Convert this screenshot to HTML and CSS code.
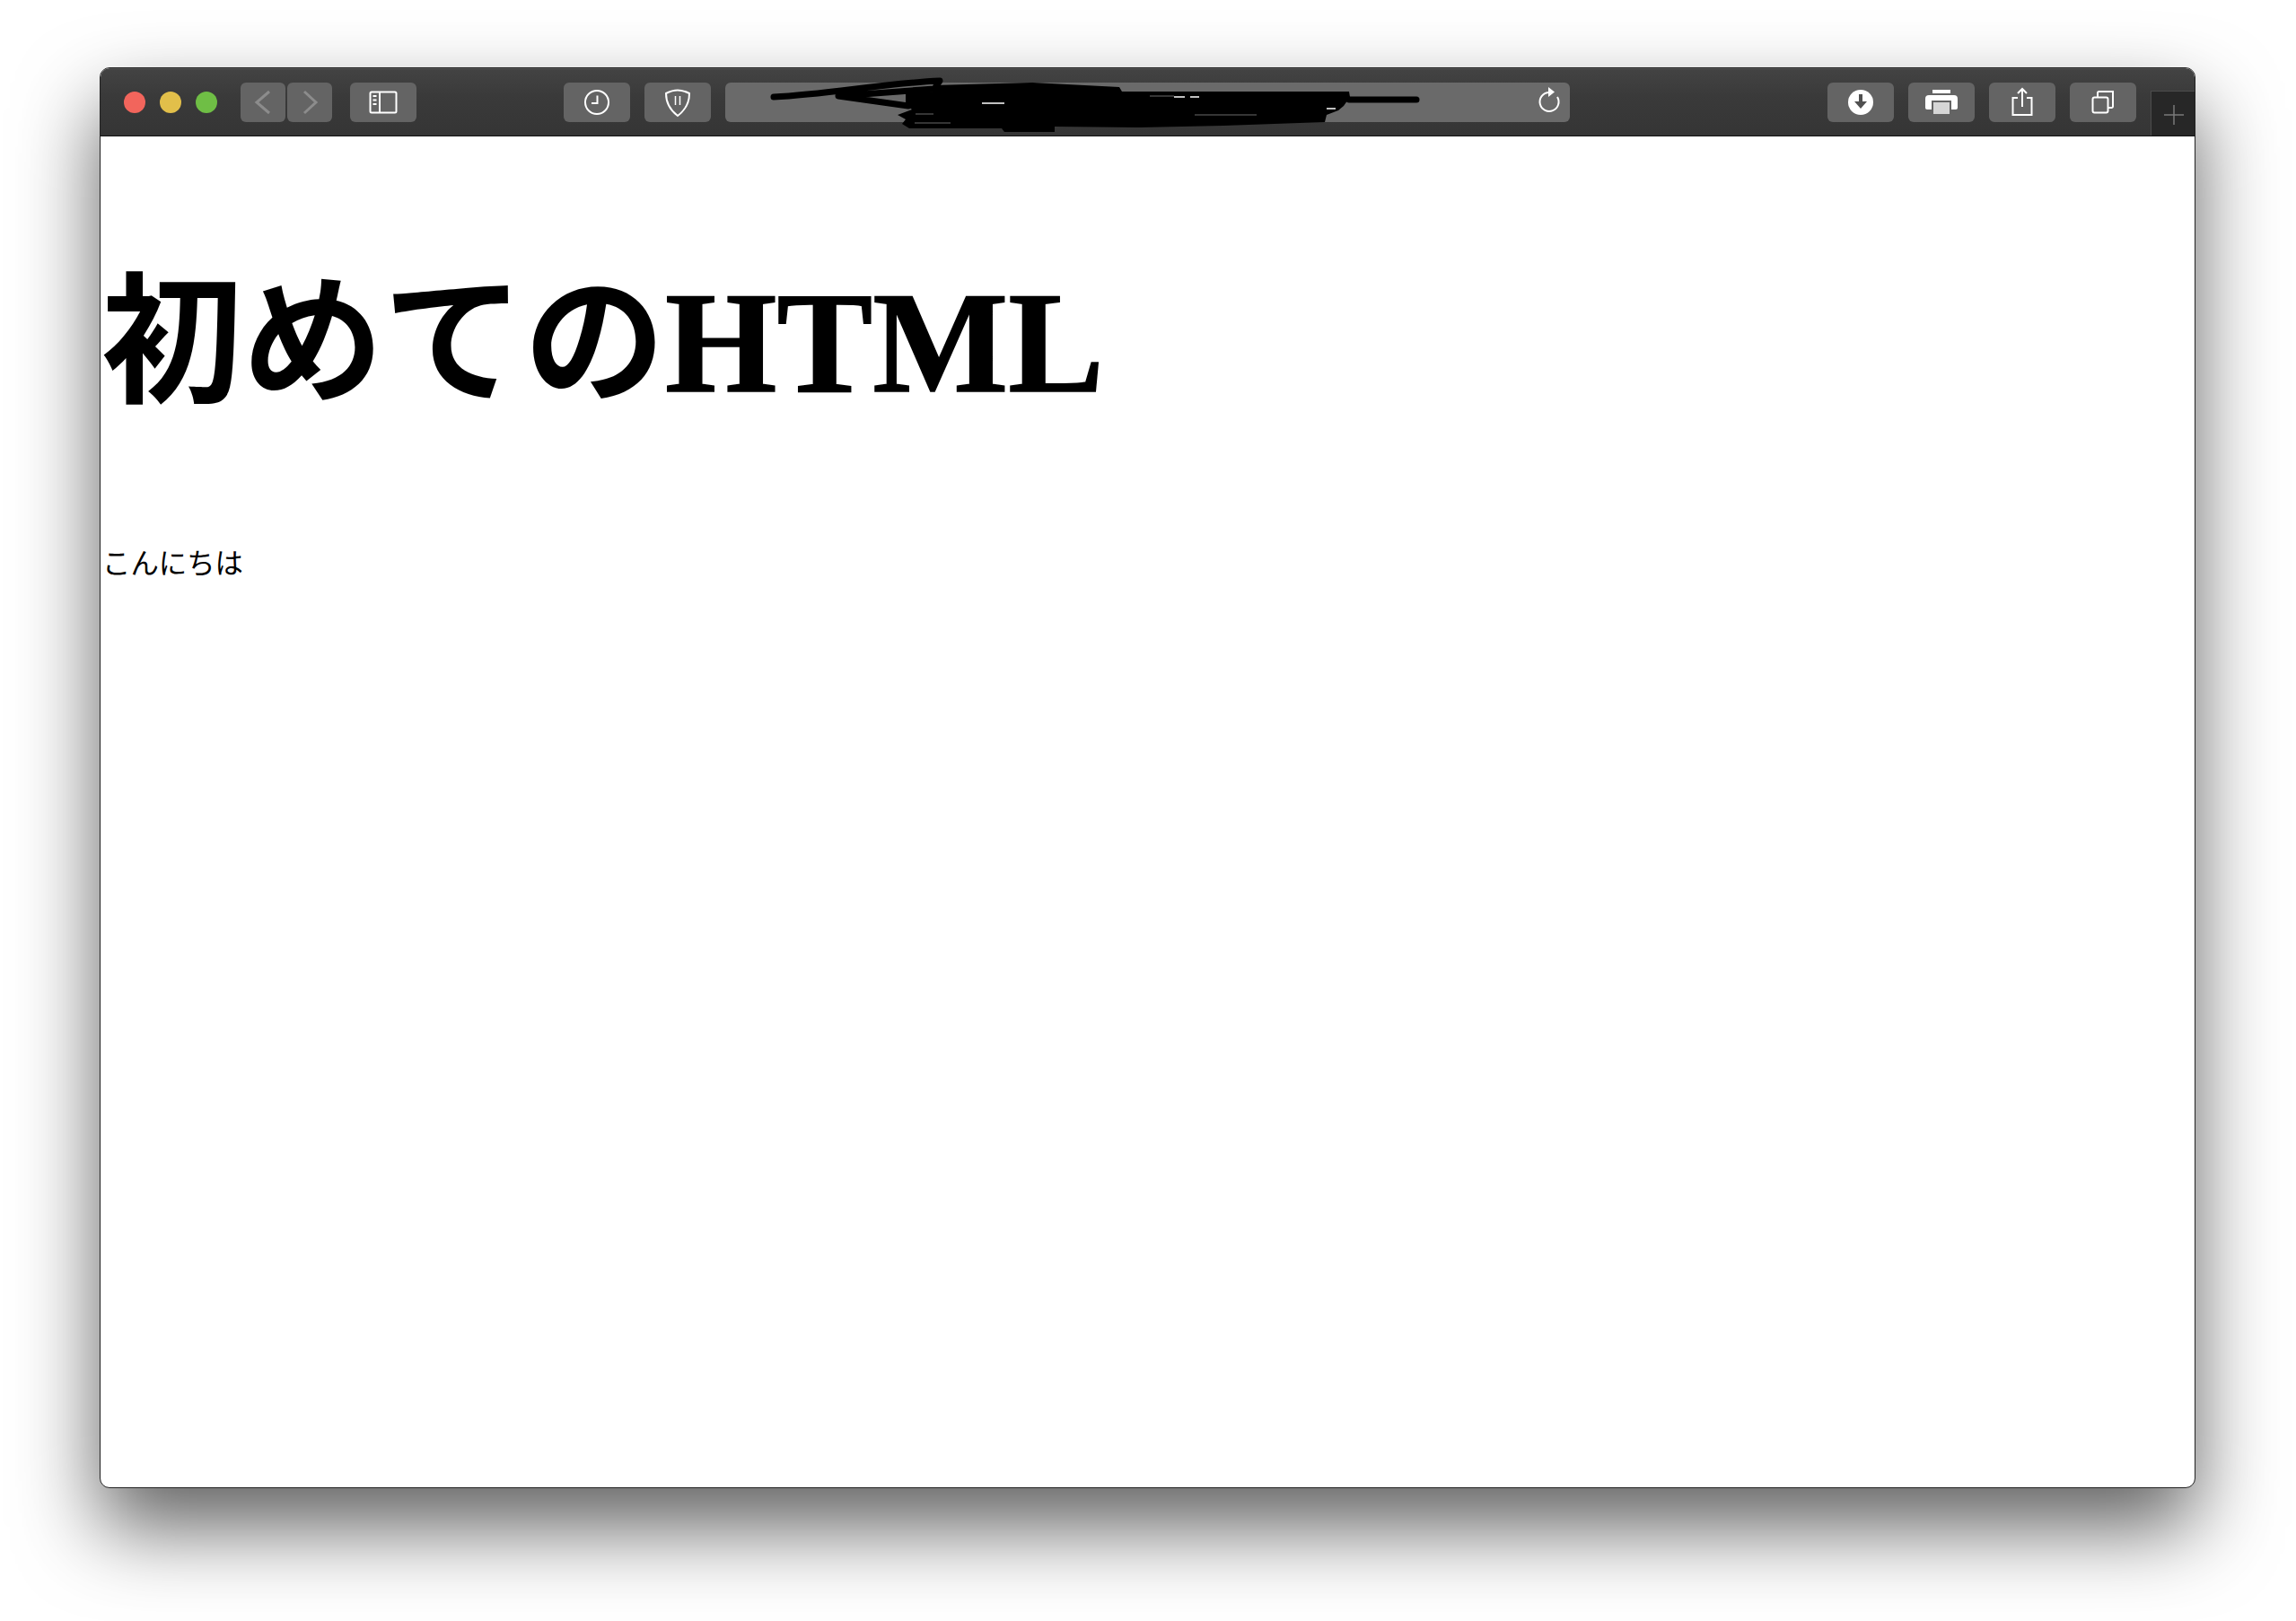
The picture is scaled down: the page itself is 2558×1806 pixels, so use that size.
FILE: index.html
```html
<!DOCTYPE html>
<html lang="ja">
<head>
    <meta charset="UTF-8">
    <title>初めてのHTML</title>
    <link rel="stylesheet" href="styles.css">
</head>
<body>
    <div class="window">
        <div class="toolbar">
            <div class="lights">
                <span class="light red"></span>
                <span class="light yellow"></span>
                <span class="light green"></span>
            </div>
            <div class="nav-group">
                <div class="btn nav-btn">
                    <svg viewBox="0 0 50 44"><path class="dim" d="M32 10 18 22l14 12"/></svg>
                </div>
                <div class="btn nav-btn">
                    <svg viewBox="0 0 50 44"><path class="dim" d="M19 10 32 22 19 34"/></svg>
                </div>
            </div>
            <div class="btn sidebar-btn">
                <svg viewBox="0 0 74 44">
                    <rect class="line" x="22.5" y="10.5" width="29" height="23" rx="1.5"/>
                    <path class="line" d="M33 10.5v23"/>
                    <path class="line" d="M25.5 15h4M25.5 19.5h4M25.5 24h4"/>
                </svg>
            </div>
            <div class="btn history-btn">
                <svg viewBox="0 0 74 44">
                    <circle class="line" cx="37" cy="22" r="13"/>
                    <path class="line" d="M37.5 14.5v8.5H31"/>
                </svg>
            </div>
            <div class="btn shield-btn">
                <svg viewBox="0 0 74 44">
                    <path class="line" d="M37 37C29 31 24 24 24 12c4-2 8-3.500 13-3.500S46 10 50 12c0 12-5 19-13 25Z"/>
                    <path class="thin" d="M34.500 15v10M39.500 15v10"/>
                </svg>
            </div>
            <div class="url-bar">
                <svg class="redaction" viewBox="0 0 941 76">
                    <path class="scrawl" d="M54 33C115 30 175 18 239 15L233 24 126 32 204 43"/>
                    <path class="scrawl" d="M695 36H770"/>
                    <path class="blot" d="M233 20 342 17 439 22 442 27 530 27 695 27 696 33 689 43 683 48 670 53 668 61 555 65 458 67 367 66 367 72 311 72 308 68 205 68 197 63 201 58 192 53 208 47 201 42 201 28 233 27Z"/>
                    <path class="sliver" d="M286 40H311M500 33H512M518 33H528M670 46H680"/>
                    <path class="grey-sliver" d="M473 32H500M523 53H592M211 62H251M212 52H232"/>
                </svg>
                <svg class="reload" viewBox="0 0 30 44">
                    <path class="line" d="M14 11a10.500 10.500 0 1 0 10 5"/>
                    <path class="fill" d="M14 5l7 5.500L14 16Z"/>
                </svg>
            </div>
            <div class="btn download-btn">
                <svg viewBox="0 0 74 44">
                    <circle class="fill" cx="37" cy="22" r="14"/>
                    <path class="dark" d="M35 13h4v8h5l-7 8-7-8h5Z"/>
                </svg>
            </div>
            <div class="btn print-btn">
                <svg viewBox="0 0 74 44">
                    <rect class="fill" x="27" y="8" width="20" height="4"/>
                    <path class="fill" d="M23 14h28a4 4 0 0 1 4 4v10a2 2 0 0 1-2 2H21a2 2 0 0 1-2-2V18a4 4 0 0 1 4-4Z"/>
                    <rect class="paper" x="27" y="21" width="20" height="15"/>
                </svg>
            </div>
            <div class="btn share-btn">
                <svg viewBox="0 0 74 44">
                    <path class="line" d="M32 17h-5.500v19h21V17H42"/>
                    <path class="line" d="M37 7v20M32 12l5-5 5 5"/>
                </svg>
            </div>
            <div class="btn tabs-btn">
                <svg viewBox="0 0 74 44">
                    <rect class="line" x="25.500" y="16.500" width="17" height="17" rx="2"/>
                    <path class="line" d="M31 16v-4.500a1.500 1.500 0 0 1 1.500-1.500H48v16.500a1.500 1.500 0 0 1-1.500 1.500H43"/>
                </svg>
            </div>
            <div class="new-tab">
                <svg viewBox="0 0 50 50"><path class="plus" d="M25 15v22M14 26h22"/></svg>
            </div>
        </div>
        <div class="content">
            <h1>初めての<span class="latin">HTML</span></h1>
            <p>こんにちは</p>
        </div>
    </div>
</body>
</html>
```

FILE: styles.css
```css
html, body { margin: 0; padding: 0; height: 100%; background: #fff; overflow: hidden; }
body { padding: 75px 0 0 111px; box-sizing: border-box; }

.window {
    width: 2335px; height: 1583px; box-sizing: border-box;
    display: flex; flex-direction: column;
    background: #fff; border: 1px solid #222; border-radius: 11px; overflow: hidden;
    box-shadow: 0 44px 90px rgba(0, 0, 0, 0.62);
}

.toolbar {
    height: 76px; flex: none; box-sizing: border-box;
    display: flex; align-items: flex-start;
    padding: 15px 0 0 26px;
    background: linear-gradient(#434343, #3a3a3a 40%, #353535);
    border-top: 1px solid #555; border-bottom: 1px solid #111;
}

.lights { display: flex; gap: 16px; margin: 10px 26px 0 0; }
.light { width: 24px; height: 24px; border-radius: 50%; }
.red { background: #f2655c; }
.yellow { background: #e2bf4a; }
.green { background: #6fbe45; }

.nav-group { display: flex; gap: 2px; margin-right: 20px; }
.btn { width: 74px; height: 44px; border-radius: 6px; background: #646464; flex: none; }
.btn svg { display: block; width: 100%; height: 100%; }
.nav-btn { width: 50px; }

.sidebar-btn { margin-right: 164px; }
.history-btn { margin-right: 16px; }
.shield-btn { margin-right: 16px; }

.url-bar {
    position: relative; width: 941px; height: 44px; margin-right: 287px; flex: none;
    display: flex; justify-content: flex-end; padding-right: 8px; box-sizing: border-box;
    background: #6a6a6a; border-radius: 6px;
}
.reload { width: 30px; height: 44px; }
.redaction { position: absolute; left: 0; top: -17px; width: 941px; height: 76px; overflow: visible; }

.download-btn, .print-btn, .share-btn { margin-right: 16px; }
.tabs-btn { margin-right: 16px; }

.new-tab {
    width: 50px; height: 50px; flex: none; align-self: flex-end; box-sizing: border-box;
    background: #272727; border-left: 1px solid #4c4c4c; border-top: 1px solid #4c4c4c;
}
.new-tab svg { display: block; width: 50px; height: 50px; }

.line, .thin, .dim, .plus, .scrawl, .sliver, .grey-sliver { fill: none; }
.line { stroke: #fff; stroke-width: 2; }
.thin { stroke: #fff; stroke-width: 1.500; }
.dim { stroke: #8c8c8c; stroke-width: 3; }
.plus { stroke: #7a7a7a; stroke-width: 1.500; }
.fill { fill: #fff; }
.dark { fill: #505050; }
.paper { fill: #d6d6d6; stroke: #646464; stroke-width: 2; }
.scrawl { stroke: #000; stroke-width: 7; stroke-linecap: round; stroke-linejoin: round; }
.blot { fill: #000; }
.sliver { stroke: #fff; stroke-width: 1.500; }
.grey-sliver { stroke: #6a6a6a; stroke-width: 1; }

.content { flex: 1; padding: 0 0 0 1px; }
h1 {
    margin: 0; padding-top: 136px;
    font: bold 157px/188px "Liberation Serif", "Noto Sans CJK JP", serif;
}
.latin { font-size: 160px; -webkit-text-stroke: 1.5px #000; }
p {
    margin: 0; padding: 133px 0 0 1px;
    font: 31.400px/1.2 "Liberation Serif", "Noto Sans CJK JP", serif;
}
```
